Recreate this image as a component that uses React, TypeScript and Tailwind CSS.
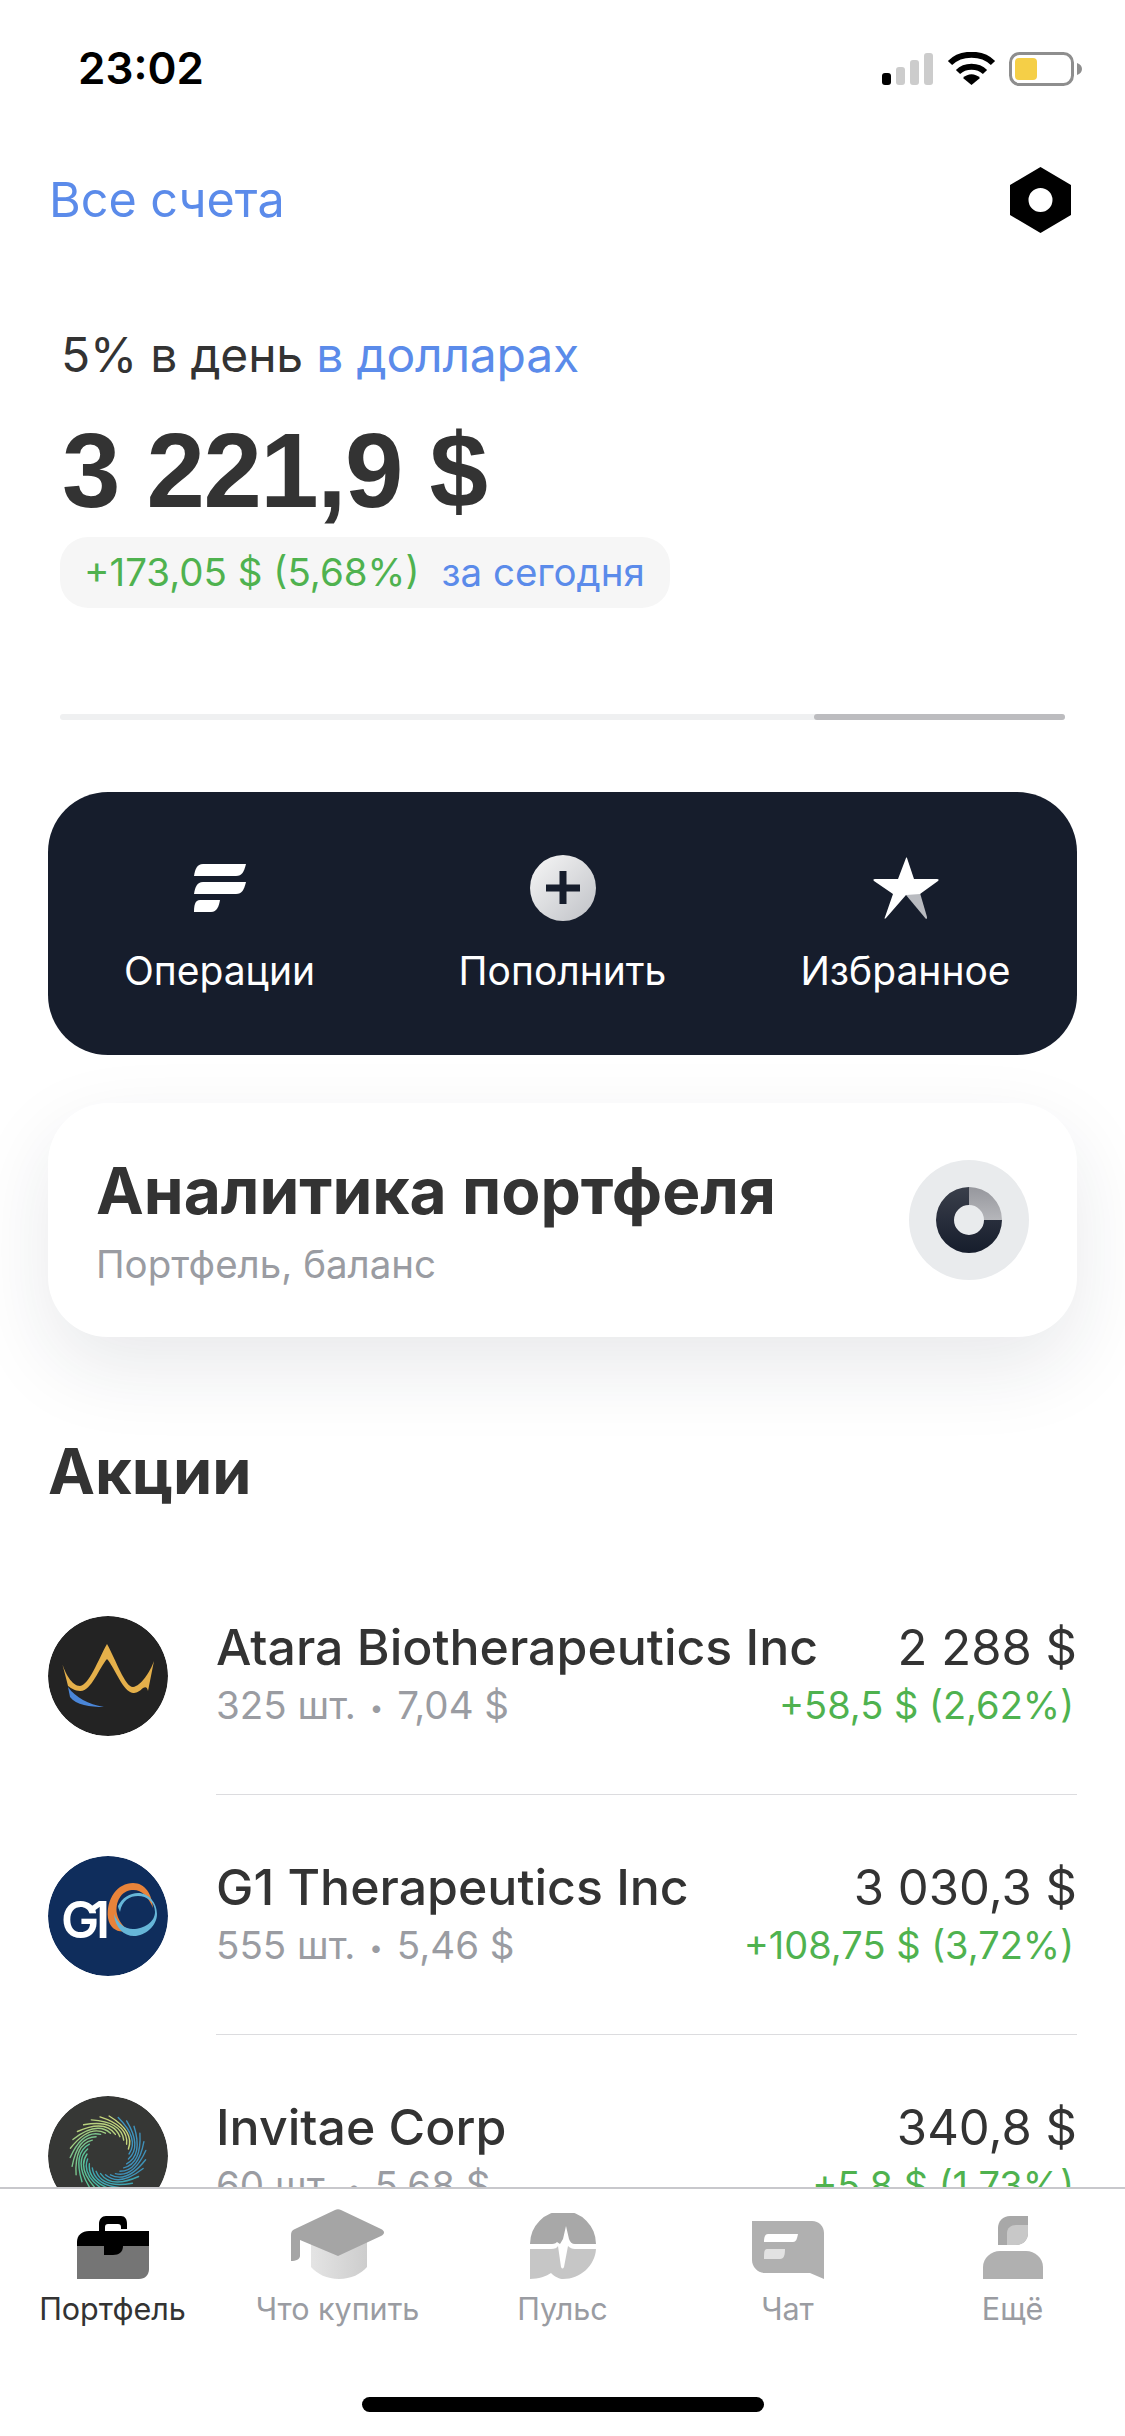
import React from "react";

const stocks = [
  { name: "Atara Biotherapeutics Inc", sub: "325 шт.", price: "7,04 $", value: "2 288 $", diff: "+58,5 $ (2,62%)", logo: "atara" },
  { name: "G1 Therapeutics Inc", sub: "555 шт.", price: "5,46 $", value: "3 030,3 $", diff: "+108,75 $ (3,72%)", logo: "g1" },
  { name: "Invitae Corp", sub: "60 шт.", price: "5,68 $", value: "340,8 $", diff: "+5,8 $ (1,73%)", logo: "invitae" },
];

const AtaraLogo = () => (
  <svg width="120" height="120" viewBox="0 0 120 120">
    <circle cx="60" cy="60" r="60" fill="#232323" />
    <path d="M14 47C17 57 24 70 32 70C41 69 50 44 59 28C68 44 77 71 85 71C93 70 102 56 106 45C104 55 102 65 100 75C99 70 97 71 95 72C91 76 88 77 85 77C75 76 67 52 59 43C51 52 43 76 32 75C27 75 23 72 20 70C18 62 16 54 14 47Z" fill="#e5b04a" />
    <path d="M20 71C28 82 40 88 56 91C42 91 28 89 22 81Z" fill="#4a86d8" />
  </svg>
);

const G1Logo = () => (
  <svg width="120" height="120" viewBox="0 0 120 120">
    <circle cx="60" cy="60" r="60" fill="#0f2d5c" />
    <path d="M60 62C58 42 70 27 85 27C97 27 104 38 105 52C100 40 93 33 84 34C73 35 67 46 69 58C71 66 76 72 82 74C72 78 62 74 60 62Z" fill="#e8833a" />
    <path d="M70 50C74 42 82 37 90 37C101 37 109 47 109 58C109 70 97 80 86 80C76 80 67 72 66 58C70 68 77 73 85 73C96 73 107 66 107 56C107 46 99 40 90 40C82 40 74 44 72 56C71 53 70 52 70 50Z" fill="#66b6d8" />
    <text x="13" y="82" fontFamily="Inter, sans-serif" fontWeight="600" fontSize="51" fill="#ffffff" textLength="49">G1</text>
  </svg>
);

const swirlColors = ["#3f93bd", "#3f8fb8", "#3f93b8", "#3fa3b0", "#45b3a5", "#5cc096", "#7cc48c", "#a0cd82", "#b8d27e", "#c6d67c"];

const InvitaeLogo = () => {
  const lines = Array.from({ length: 26 }, (_, i) => {
    const a = (i / 26) * Math.PI * 2;
    const p = (r: number, t: number) => `${(60 + r * Math.cos(t)).toFixed(1)} ${(58 + r * Math.sin(t)).toFixed(1)}`;
    return { d: `M${p(38, a - 1.3)}Q${p(35, a - 0.45)} ${p(21, a)}`, c: swirlColors[Math.floor((i * 10) / 26)] };
  });
  return (
    <svg width="120" height="120" viewBox="0 0 120 120">
      <circle cx="60" cy="60" r="60" fill="#363735" />
      {lines.map((l, i) => (
        <path key={i} d={l.d} fill="none" stroke={l.c} strokeWidth="1.4" strokeLinecap="round" />
      ))}
    </svg>
  );
};

const logos: Record<string, React.ReactNode> = {
  atara: <AtaraLogo />,
  g1: <G1Logo />,
  invitae: <InvitaeLogo />,
};

const StatusIcons = () => (
  <svg width="204" height="36" viewBox="0 0 204 36">
    <rect x="0" y="21" width="9" height="12" rx="3" fill="#000" />
    <rect x="14" y="15" width="9" height="18" rx="3" fill="#ccc" />
    <rect x="28" y="8" width="9" height="25" rx="3" fill="#ccc" />
    <rect x="42" y="1" width="9" height="32" rx="3" fill="#ccc" />
    <path d="M68 11C79 0 100 0 111 11" fill="none" stroke="#000" strokeWidth="6" />
    <path d="M76 20C83 13 96 13 103 20" fill="none" stroke="#000" strokeWidth="6" />
    <path d="M81 26C86 21 93 21 98 26L89.500 33Z" fill="#000" />
    <rect x="128.500" y="1.500" width="62" height="31" rx="9" fill="none" stroke="#8e8e8e" strokeWidth="3" />
    <rect x="133" y="6" width="22" height="22" rx="4" fill="#f5cf47" />
    <path d="M195 11C198 12 200 14 200 17C200 20 198 22 195 23Z" fill="#8e8e8e" />
  </svg>
);

const OperationsIcon = () => (
  <svg width="52" height="48" viewBox="0 0 52 48">
    <path d="M9 0H52C50 8 48 12 42 12H0C1 5 3 0 9 0Z" fill="#fff" />
    <path d="M9 18H52C50 26 48 30 42 30H0C1 23 3 18 9 18Z" fill="#fff" />
    <path d="M6 36H26C25 42 23 48 17 48H0C0 41 1 36 6 36Z" fill="#fff" />
  </svg>
);

const PlusIcon = () => (
  <svg width="66" height="66" viewBox="0 0 66 66">
    <defs>
      <linearGradient id="plusFill" x1="0" y1="0" x2="1" y2="1">
        <stop offset="0" stopColor="#f7f7f7" />
        <stop offset="1" stopColor="#bfc1c6" />
      </linearGradient>
    </defs>
    <circle cx="33" cy="33" r="33" fill="url(#plusFill)" />
    <path d="M29.500 16H36.500V29.500H50V36.500H36.500V49H29.500V36.500H16V29.500H29.500Z" fill="#161d2c" />
  </svg>
);

const StarIcon = () => (
  <svg width="66" height="62" viewBox="0 0 66 62">
    <path d="M33 38L53 62C54 62 54 61 54 60L47 36L41 28Z" fill="#b9bbc0" />
    <path d="M33 1C33.500 0 33.500 0 34 1L41 22H64C66 22 66 23 65 24L47 37L33 38L13 61C12 62 11 62 12 60L20 37L1 24C0 23 0 22 2 22H25Z" fill="#fff" />
  </svg>
);

const DonutIcon = () => (
  <svg width="66" height="66" viewBox="0 0 66 66">
    <defs>
      <linearGradient id="donutDark" x1="0" y1="0" x2="0" y2="1">
        <stop offset="0" stopColor="#3a3f4b" />
        <stop offset="1" stopColor="#161d2c" />
      </linearGradient>
      <linearGradient id="donutLight" x1="0" y1="0" x2="0" y2="1">
        <stop offset="0" stopColor="#96979d" />
        <stop offset="1" stopColor="#b5b6ba" />
      </linearGradient>
    </defs>
    <path d="M33 0A33 33 0 1 0 66 33H48A15 15 0 1 1 33 18Z" fill="url(#donutDark)" />
    <path d="M33 0A33 33 0 0 1 66 33H48A15 15 0 0 0 33 18Z" fill="url(#donutLight)" />
  </svg>
);

const BriefcaseIcon = () => (
  <svg width="72" height="63" viewBox="0 0 72 63">
    <path d="M22 15V8C22 3 25 0 29 0H44C48 0 50 3 50 8V13H44V11C44 9 43 8 41 8H31C29 8 28 9 28 11V15Z" fill="#000" />
    <path d="M0 30H72V53C72 59 68 63 62 63H0Z" fill="#757575" />
    <path d="M0 30V26C0 19 5 15 12 15H72V30Z" fill="#000" />
    <path d="M27 30H46C46 36 42 39 36 39H27Z" fill="#000" />
  </svg>
);

const CapIcon = () => (
  <svg width="94" height="70" viewBox="0 0 94 70">
    <defs>
      <linearGradient id="capBody" x1="0" y1="0" x2="1" y2="0">
        <stop offset="0" stopColor="#e4e4e4" />
        <stop offset="1" stopColor="#cdcdcd" />
      </linearGradient>
    </defs>
    <path d="M20 30H76V58C70 65 60 70 48 70C36 70 26 65 20 58Z" fill="url(#capBody)" />
    <path d="M44 1C46 0 48 0 50 1L90 20C94 22 94 25 90 27L47 47L9 31V47C9 50 5 52 0 52V26C0 23 1 21 4 20Z" fill="#a5a5a5" />
  </svg>
);

const PulseIcon = () => (
  <svg width="66" height="66" viewBox="0 0 66 66">
    <path d="M0 31A33 33 0 0 1 66 31H45C42 31 40 29 39 26L36 13L33 26L30 31L27 29C25 31 23 31 20 31Z" fill="#a8a8a8" />
    <path d="M0 36H21C25 36 27 35 28 33L31 54C32 56 33 56 34 54L38 33C40 35 42 36 45 36H66C65 53 50 66 33 66C30 66 25 64 21 60C17 63 8 66 0 66Z" fill="#c6c6c6" />
  </svg>
);

const ChatIcon = () => (
  <svg width="72" height="58" viewBox="0 0 72 58">
    <path d="M0 0H60C67 0 72 5 72 12V58L58 52H13C6 52 0 46 0 39Z" fill="#b0b0b0" />
    <path d="M16 13H46C45 18 44 21 41 21H12C12 16 13 13 16 13Z" fill="#fff" />
    <path d="M15 28H33C33 34 32 38 28 38H12C12 32 12 28 15 28Z" fill="#e2e2e2" />
  </svg>
);

const MoreIcon = () => (
  <svg width="60" height="63" viewBox="0 0 60 63">
    <path d="M15 29V12C15 5 20 0 27 0H45V17C45 24 40 29 33 29Z" fill="#a8a8a8" />
    <path d="M24 29V17C24 12 28 9 33 9H45V17C45 24 40 29 33 29Z" fill="#c8c8c8" />
    <path d="M0 63V51C0 42 8 35 17 35H43C52 35 60 42 60 51V63Z" fill="#b0b0b0" />
  </svg>
);

const tabs = [
  { label: "Портфель", icon: <BriefcaseIcon />, active: true },
  { label: "Что купить", icon: <CapIcon /> },
  { label: "Пульс", icon: <PulseIcon /> },
  { label: "Чат", icon: <ChatIcon /> },
  { label: "Ещё", icon: <MoreIcon /> },
];

const actions = [
  { label: "Операции", icon: <OperationsIcon /> },
  { label: "Пополнить", icon: <PlusIcon /> },
  { label: "Избранное", icon: <StarIcon /> },
];

export default function App() {
  return (
    <div className="w-[1125px] h-[2436px] flex flex-col overflow-hidden bg-white font-['Inter',sans-serif] text-[#333333]">
      <div className="flex-1 min-h-0 overflow-hidden">
        {/* Status bar */}
        <div className="h-[154px] flex justify-between items-start pl-[78px] pr-[39px] pt-[46px]">
          <span className="text-[44px] leading-[44px] font-semibold text-black">23:02</span>
          <div className="pt-[6px]">
            <StatusIcons />
          </div>
        </div>

        {/* Header */}
        <div className="h-[92px] flex justify-between items-center pl-[49px] pr-[54px]">
          <span className="text-[48.5px] text-[#5b8bea]">Все счета</span>
          <svg width="61" height="66" viewBox="0 0 61 66">
            <path d="M30.500 0L61 18V48L30.500 66L0 48V18ZM30.500 21A12 12 0 1 0 30.500 45A12 12 0 1 0 30.500 21Z" fill="#000" fillRule="evenodd" />
          </svg>
        </div>

        {/* Balance */}
        <div className="px-[60px] pt-[79px]">
          <div className="text-[48px] leading-[60px] pl-[1px] tracking-[-0.2px]">
            5% в день <span className="text-[#5b8bea]">в долларах</span>
          </div>
          <div className="text-[105px] leading-[120px] font-bold font-['Liberation_Sans',sans-serif] tracking-[-1.5px] mt-[26px] pl-[2px]">3 221,9 $</div>
          <div className="mt-[6px] w-[610px] h-[71px] rounded-[28px] bg-[#f6f6f6] flex items-center gap-[22px] pl-[24px] text-[38.5px]">
            <span className="text-[#4fb24f]">+173,05 $ (5,68%)</span>
            <span className="text-[#5b8bea]">за сегодня</span>
          </div>
          <div className="mt-[106px] w-[1005px] h-[6px] bg-[#eff0f1] rounded-full flex justify-end">
            <div className="w-[251px] h-full bg-[#bcbcbf] rounded-full" />
          </div>
        </div>

        {/* Actions */}
        <div className="mx-[48px] mt-[72px] h-[263px] rounded-[60px] bg-[#161d2c] grid grid-cols-3 pt-[63px]">
          {actions.map((a) => (
            <div key={a.label} className="flex flex-col items-center">
              <div className="h-[66px] flex items-center justify-center">{a.icon}</div>
              <div className="mt-[27px] text-[39px] leading-[46px] text-white">{a.label}</div>
            </div>
          ))}
        </div>

        {/* Analytics */}
        <div className="mx-[48px] mt-[48px] h-[234px] rounded-[60px] bg-white shadow-[0_30px_80px_rgba(30,40,60,0.10)] flex items-center justify-between pl-[48px] pr-[48px]">
          <div>
            <div className="text-[64px] leading-[74px] font-bold">Аналитика портфеля</div>
            <div className="text-[38.5px] leading-[46px] mt-[13px] text-[#9a9ca2]">Портфель, баланс</div>
          </div>
          <div className="w-[120px] h-[120px] rounded-full bg-[#e9ebed] flex items-center justify-center">
            <DonutIcon />
          </div>
        </div>

        {/* Stocks */}
        <div className="px-[48px] pt-[98px]">
          <div className="text-[63px] leading-[72px] font-bold">Акции</div>
          <div className="mt-[109px]">
            {stocks.map((s, i) => (
              <div key={s.name} className="flex gap-[48px] h-[240px]">
                <div className="w-[120px] h-[120px] rounded-full overflow-hidden shrink-0">{logos[s.logo]}</div>
                <div className={`flex-1 h-[179px] ${i < 2 ? "border-b-[1px] border-[#dcdcdf]" : ""}`}>
                  <div className="flex justify-between items-baseline pt-[2px]">
                    <span className="text-[50px] leading-[58px] font-medium">{s.name}</span>
                    <span className="text-[49px] leading-[58px]">{s.value}</span>
                  </div>
                  <div className="flex justify-between items-baseline mt-[5px]">
                    <span className="text-[38.5px] leading-[46px] text-[#9a9ca2]">
                      {s.sub}<span className="mx-[14px] text-[24px] align-[3px]">•</span>{s.price}
                    </span>
                    <span className="text-[38px] leading-[46px] text-[#4fb24f] pr-[3px]">{s.diff}</span>
                  </div>
                </div>
              </div>
            ))}
          </div>
        </div>
      </div>

      {/* Tab bar */}
      <div className="h-[249px] shrink-0 bg-white border-t-[2px] border-[#c8c8cc] flex flex-col">
        <div className="grid grid-cols-5 pt-[18px]">
          {tabs.map((t) => (
            <div key={t.label} className="flex flex-col items-center">
              <div className="h-[72px] flex items-end justify-center">{t.icon}</div>
              <div className={`mt-[12px] text-[30.5px] leading-[36px] ${t.active ? "text-[#333333]" : "text-[#9a9ca2]"}`}>{t.label}</div>
            </div>
          ))}
        </div>
        <div className="mt-auto mb-[24px] mx-auto w-[402px] h-[15px] rounded-full bg-black" />
      </div>
    </div>
  );
}
